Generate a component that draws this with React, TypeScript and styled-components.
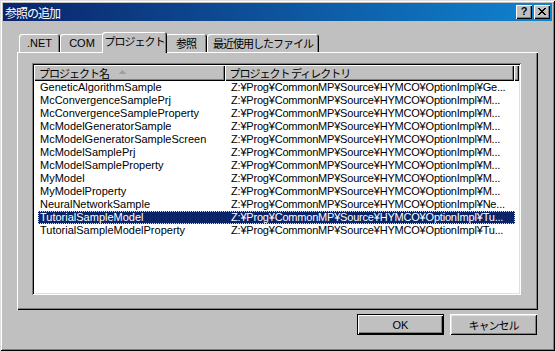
import React from 'react';
import styled, { createGlobalStyle } from 'styled-components';

const GlobalStyle = createGlobalStyle`
  html, body {
    margin: 0;
    padding: 0;
    background: #c0c0c0;
  }
  body {
    font-family: "Liberation Sans", "Noto Sans CJK JP", sans-serif;
    font-size: 11px;
    color: #000;
  }
`;

const Window = styled.div`
  width: 555px;
  height: 351px;
  box-sizing: border-box;
  padding: 3px;
  background: #c0c0c0;
  box-shadow: inset 1px 1px #dfdfdf, inset -1px -1px #000, inset 2px 2px #fff, inset -2px -2px #808080;
  display: flex;
  flex-direction: column;
`;

const TitleBar = styled.div`
  height: 18px;
  display: flex;
  align-items: center;
  justify-content: space-between;
  padding: 0 2px 0 2px;
  background: linear-gradient(to right, #0a246a, #1084d0);
`;

const Title = styled.span`
  color: #fff;
  font-family: "Noto Sans CJK JP", sans-serif;
  font-size: 12px;
  letter-spacing: -1px;
`;

const CaptionButtons = styled.div`
  display: flex;
  gap: 2px;
`;

const CaptionButton = styled.div`
  width: 16px;
  height: 14px;
  box-sizing: border-box;
  background: #c0c0c0;
  box-shadow: inset 1px 1px #fff, inset -1px -1px #000, inset -2px -2px #808080;
  display: flex;
  align-items: center;
  justify-content: center;
  font-weight: bold;
  font-size: 11px;
  line-height: 1;
  padding-bottom: 1px;
`;

const Content = styled.div`
  display: flex;
  flex-direction: column;
  padding: 10px 14px 0 14px;
`;

const TabStrip = styled.div`
  display: flex;
  align-items: flex-end;
  height: 21px;
  padding-left: 2px;
`;

const Tab = styled.div<{ $w: number; $active?: boolean }>`
  width: ${(p) => p.$w}px;
  height: ${(p) => (p.$active ? 21 : 18)}px;
  margin: ${(p) => (p.$active ? '0 -2px -1px -2px' : '0')};
  position: ${(p) => (p.$active ? 'relative' : 'static')};
  z-index: ${(p) => (p.$active ? 1 : 0)};
  box-sizing: border-box;
  padding-bottom: ${(p) => (p.$active ? 3 : 0)}px;
  background: #c0c0c0;
  border-radius: 3px 3px 0 0;
  box-shadow: inset 1px 1px #fff, inset -1px 0 #000, inset -2px 0 #808080;
  display: flex;
  align-items: center;
  justify-content: center;
  white-space: nowrap;
`;

const Jp = styled.span`
  font-family: "Noto Sans CJK JP", sans-serif;
  font-size: 11px;
  letter-spacing: -1px;
`;

const Panel = styled.div`
  height: 258px;
  box-sizing: border-box;
  padding: 11px 17px 15px 15px;
  display: flex;
  flex-direction: column;
  box-shadow: inset 1px 1px #fff, inset -1px -1px #000, inset -2px -2px #808080;
`;

const ListView = styled.div`
  flex: 1;
  padding: 2px;
  background: #fff;
  display: flex;
  flex-direction: column;
  overflow: hidden;
  box-shadow: inset 1px 1px #808080, inset -1px -1px #fff, inset 2px 2px #000, inset -2px -2px #dfdfdf;
`;

const HeaderRow = styled.div`
  display: flex;
  height: 16px;
  flex-shrink: 0;
`;

const HeaderCell = styled.div<{ $w?: number }>`
  ${(p) => (p.$w ? `width: ${p.$w}px;` : 'flex: 1;')}
  box-sizing: border-box;
  padding-left: 5px;
  background: #c0c0c0;
  box-shadow: inset 1px 1px #fff, inset -1px -1px #000, inset -2px -2px #808080;
  display: flex;
  align-items: center;
  white-space: nowrap;
  overflow: hidden;
`;

const SortArrow = styled.svg`
  margin-left: 10px;
  margin-top: -2px;
`;

const Rows = styled.div`
  display: flex;
  flex-direction: column;
  padding-left: 4px;
`;

const Row = styled.div<{ $selected?: boolean }>`
  display: flex;
  width: 477px;
  height: 13px;
  line-height: 13px;
  background: ${(p) => (p.$selected ? '#0a246a' : 'transparent')};
  color: ${(p) => (p.$selected ? '#fff' : '#000')};
  outline: ${(p) => (p.$selected ? '1px dotted #e8e8a0' : 'none')};
  outline-offset: -1px;
`;

const Cell = styled.div<{ $w: number; $pad: number; $tight?: boolean }>`
  width: ${(p) => p.$w}px;
  box-sizing: border-box;
  padding-left: ${(p) => p.$pad}px;
  letter-spacing: ${(p) => (p.$tight ? '-0.2px' : 'normal')};
  white-space: nowrap;
  overflow: hidden;
`;

const ButtonRow = styled.div`
  display: flex;
  justify-content: flex-end;
  gap: 6px;
  margin-top: 4px;
  padding-right: 1px;
`;

const Button = styled.div<{ $default?: boolean }>`
  width: 87px;
  height: 21px;
  box-sizing: border-box;
  background: #c0c0c0;
  display: flex;
  align-items: center;
  justify-content: center;
  border: ${(p) => (p.$default ? '1px solid #000' : 'none')};
  box-shadow: ${(p) =>
    p.$default
      ? 'inset 1px 1px #fff, inset -1px -1px #000, inset -2px -2px #808080'
      : 'inset 1px 1px #fff, inset -1px -1px #000, inset 2px 2px #dfdfdf, inset -2px -2px #808080'};
`;

const base = 'Z:¥Prog¥CommonMP¥Source¥HYMCO¥OptionImpl¥';

const projects: [string, string][] = [
  ['GeneticAlgorithmSample', 'Ge...'],
  ['McConvergenceSamplePrj', 'M...'],
  ['McConvergenceSampleProperty', 'M...'],
  ['McModelGeneratorSample', 'M...'],
  ['McModelGeneratorSampleScreen', 'M...'],
  ['McModelSamplePrj', 'M...'],
  ['McModelSampleProperty', 'M...'],
  ['MyModel', 'M...'],
  ['MyModelProperty', 'M...'],
  ['NeuralNetworkSample', 'Ne...'],
  ['TutorialSampleModel', 'Tu...'],
  ['TutorialSampleModelProperty', 'Tu...'],
];

const tabs = [
  { label: '.NET', w: 41, jp: false },
  { label: 'COM', w: 44, jp: false },
  { label: 'プロジェクト', w: 65, jp: true, active: true },
  { label: '参照', w: 42, jp: true },
  { label: '最近使用したファイル', w: 112, jp: true },
];

const App: React.FC = () => {
  return (
    <>
      <GlobalStyle />
      <Window>
        <TitleBar>
          <Title>参照の追加</Title>
          <CaptionButtons>
            <CaptionButton>?</CaptionButton>
            <CaptionButton>
              <svg width="8" height="7" viewBox="0 0 8 7" shapeRendering="crispEdges">
                <path d="M0 0h2v1h-2zM6 0h2v1h-2zM1 1h2v1h-2zM5 1h2v1h-2zM2 2h4v1h-4zM3 3h2v1h-2zM2 4h4v1h-4zM1 5h2v1h-2zM5 5h2v1h-2zM0 6h2v1h-2zM6 6h2v1h-2z" fill="#000" />
              </svg>
            </CaptionButton>
          </CaptionButtons>
        </TitleBar>

        <Content>
          <TabStrip>
            {tabs.map((t) => (
              <Tab key={t.label} $w={t.w} $active={t.active}>
                {t.jp ? <Jp>{t.label}</Jp> : t.label}
              </Tab>
            ))}
          </TabStrip>

          <Panel>
            <ListView>
              <HeaderRow>
                <HeaderCell $w={191}>
                  <Jp>プロジェクト名</Jp>
                  <SortArrow width="7" height="4" viewBox="0 0 7 4" shapeRendering="crispEdges">
                    <path d="M3 0h1v1h1v1h1v1h1v1h-7v-1h1v-1h1v-1h1z" fill="#a0a0a0" />
                  </SortArrow>
                </HeaderCell>
                <HeaderCell $w={290}>
                  <Jp>プロジェクト ディレクトリ</Jp>
                </HeaderCell>
                <HeaderCell />
              </HeaderRow>
              <Rows>
                {projects.map(([name, tail]) => (
                  <Row key={name} $selected={name === 'TutorialSampleModel'}>
                    <Cell $w={187} $pad={2}>{name}</Cell>
                    <Cell $w={290} $pad={6} $tight>{base + tail}</Cell>
                  </Row>
                ))}
              </Rows>
            </ListView>
          </Panel>

          <ButtonRow>
            <Button $default>OK</Button>
            <Button>
              <Jp>キャンセル</Jp>
            </Button>
          </ButtonRow>
        </Content>
      </Window>
    </>
  );
};

export default App;
